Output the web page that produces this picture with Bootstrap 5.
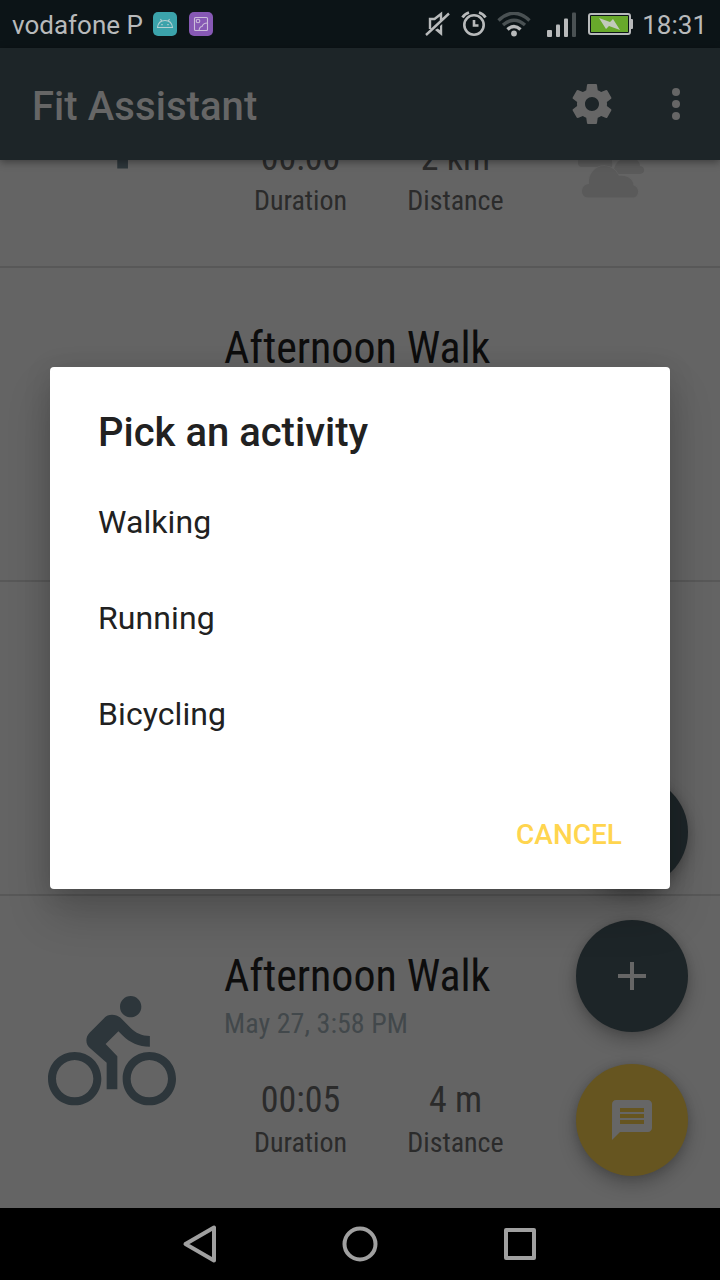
<!DOCTYPE html>
<html lang="en">
<head>
<meta charset="utf-8">
<meta name="viewport" content="width=device-width, initial-scale=1">
<title>Fit Assistant</title>
<link href="https://cdn.jsdelivr.net/npm/bootstrap@5.3.0/dist/css/bootstrap.min.css" rel="stylesheet">
<style>
  body { font-family: Roboto, "Liberation Sans", sans-serif; background: #646464; line-height: 1.172; }
  svg { display: block; flex: none; }
  .screen { width: 720px; height: 1280px; }
  .status-bar { height: 48px; background: #0c1417; color: #b8babb; font-size: 26px; padding: 0 13px 0 12px; }
  .operator, .clock { padding-top: 3px; }
  .status-bar .notice { margin-left: 10px; }
  .status-bar .notice + .notice { margin-left: 12px; }
  .mute { margin-right: 10px; }
  .wifi { margin: 2px 16px 0 10px; }
  .signal { margin-top: 1px; }
  .battery { margin: 0 9px 0 12px; }
  .app-bar { height: 112px; background: #1d2528; color: #666; padding: 0 32px; z-index: 2; box-shadow: 0 2px 8px rgba(0,0,0,.4); }
  .app-title { font-size: 40px; font-weight: 500; line-height: 48px; padding-top: 5px; letter-spacing: .07px; }
  .overflow-icon { margin: 0 -12px 0 36px; }
  .feed { height: 1048px; }
  .history { margin-top: -206px; }
  .activity { height: 314px; border-bottom: 2px solid #585858; padding: 54px 0 0 48px; font-family: "Roboto Condensed", Roboto, sans-serif; font-stretch: 75%; }
  .activity-icon { width: 128px; margin: 38px 48px 0 0; color: #2d363b; }
  .activity-title { font-size: 44px; line-height: 52px; color: #0d0d0d; letter-spacing: -.05px; }
  .activity-date { font-size: 28px; line-height: 33px; margin-top: 5px; color: #42484b; letter-spacing: .06px; }
  .stats { margin-top: 39px; color: #2b2b2b; gap: 3px; }
  .stats-first { margin-top: 129px; }
  .stat { width: 152px; text-align: center; padding-left: 1px; }
  .stat-value { font-size: 36px; line-height: 42px; }
  .stat-label { font-size: 28px; line-height: 33px; margin-top: 5px; letter-spacing: -.03px; }
  .weather { margin: 138px 0 0 44px; color: #5a5a5a; }
  .fabs { right: 32px; bottom: 32px; gap: 32px; }
  .fab { width: 112px; height: 112px; border: 0; background: #1d2528; color: #666; box-shadow: 0 8px 18px rgba(0,0,0,.25), 0 0 8px rgba(0,0,0,.12); }
  .fab-chat { background: #665520; }
  .picker { left: 50px; top: 367px; width: 620px; height: 522px; z-index: 5; border-radius: 4px; background: #fff; color: #212121; padding-top: 42px; box-shadow: 0 26px 44px rgba(0,0,0,.19), 0 4px 28px rgba(0,0,0,.12); }
  .picker-title { font-size: 40px; font-weight: 500; line-height: 47px; margin: 0 48px 18px; }
  .picker .list-group-item { height: 96px; font-size: 32px; padding: 2px 48px 0; color: #212121; background: none; letter-spacing: .08px; }
  .cancel { font-size: 28px; font-weight: 500; line-height: 33px; color: #ffd54f; padding: 0; margin: 56px 48px 0 0; border: 0; }
  .system-nav { height: 72px; background: #000; }
</style>
</head>
<body>
<div class="screen d-flex flex-column position-relative overflow-hidden">
  <header class="status-bar d-flex align-items-center">
    <span class="operator">vodafone P</span>
    <svg class="notice" width="24" height="24" viewBox="0 0 24 24"><rect width="24" height="24" rx="5" fill="#3ba3ab"/><path d="M4.500 15.500C5 11 8 8.500 12 8.500s7 2.500 7.500 7zM7.500 7l1.300 2.200M16.500 7l-1.300 2.200" fill="none" stroke="#b5d0d2" stroke-width="1.100"/><path d="M8.300 12h1.400v1.200H8.300zM14.300 12h1.400v1.200h-1.400z" fill="#b5d0d2"/></svg>
    <svg class="notice" width="24" height="24" viewBox="0 0 24 24"><rect width="24" height="24" rx="5" fill="#8759b5"/><g fill="none" stroke="#cbbdda" stroke-width="1.100"><rect x="5.500" y="5.500" width="13" height="13" rx="1"/><circle cx="9" cy="9" r="1.800"/><path d="M10 18.500c.5-3 1-4 3-4 1-3 3-3.500 5.500-3.500"/></g></svg>
    <svg class="mute ms-auto" width="26" height="26" viewBox="0 0 26 26" fill="none" stroke="#b8babb" stroke-width="2.400"><path d="M5 18V8h4.500L16 3v6M1 24L24 2.500"/><path d="M17.200 13v12L10 19l2.500-1.500 2.500 1.500v-4z" fill="#b8babb" stroke="none"/></svg>
    <svg width="26" height="26" viewBox="0 0 26 26" fill="none" stroke="#b8babb"><circle cx="13" cy="14" r="9.700" stroke-width="2.600"/><path d="M13 9v5.500h4.500" stroke-width="2.600"/><path d="M1.500 6.500Q3.500 3 8 1.500M24.500 6.500Q22.500 3 18 1.500" stroke-width="2.800"/></svg>
    <svg class="wifi" width="34" height="26" viewBox="0 0 34 26" fill="none" stroke-width="3.400"><path d="M1.500 8.500Q17-6 32.500 8.500M6 13Q17 3.500 28 13" stroke="#4a5153"/><path d="M10.500 17.500Q17 11.500 23.500 17.500" stroke="#b8babb"/><circle cx="17" cy="21.500" r="2.900" fill="#b8babb"/></svg>
    <svg class="signal" width="29" height="26" viewBox="0 0 29 26" fill="#b8babb"><rect y="18" width="5" height="7" rx="1"/><rect x="9" y="12.500" width="4" height="12.500" rx="1"/><rect x="17" y="6.500" width="4" height="18.500" rx="1"/><rect x="25" y="0.500" width="4" height="24.500" rx="1" fill="#4a5153"/></svg>
    <svg class="battery" width="45" height="24" viewBox="0 0 45 24"><rect x="1" y="2" width="41" height="20" rx="2" fill="none" stroke="#b8babb" stroke-width="2"/><rect x="3" y="4" width="37" height="16" fill="#68a92b"/><path d="M42 7h2q1 0 1 1v8q0 1-1 1h-2z" fill="#b8babb"/><path d="M11 6l11 4 3-3 7 11-11-4-3 3z" fill="#c2cabb"/></svg>
    <span class="clock">18:31</span>
  </header>

  <nav class="app-bar d-flex align-items-center position-relative">
    <span class="app-title me-auto">Fit Assistant</span>
    <svg width="48" height="48" viewBox="0 0 24 24" fill="currentColor"><path d="M19.430 12.980c.04-.32.070-.64.070-.98s-.03-.66-.07-.98l2.110-1.650c.19-.15.240-.42.120-.64l-2-3.460c-.12-.22-.39-.3-.61-.22l-2.490 1c-.52-.4-1.080-.73-1.690-.98l-.38-2.650C14.460 2.180 14.250 2 14 2h-4c-.25 0-.46.180-.49.420l-.38 2.650c-.61.250-1.170.590-1.690.980l-2.490-1c-.23-.09-.49 0-.61.220l-2 3.460c-.13.220-.07.490.120.640l2.110 1.650c-.04.320-.07.650-.07.980s.03.660.070.980l-2.110 1.650c-.19.150-.24.420-.12.640l2 3.460c.12.220.390.300.610.220l2.490-1c.52.400 1.080.730 1.690.980l.38 2.650c.03.240.240.420.490.420h4c.25 0 .46-.18.490-.42l.38-2.650c.61-.25 1.170-.59 1.690-.98l2.490 1c.23.090.490 0 .61-.22l2-3.460c.12-.22.070-.49-.12-.64l-2.110-1.650zM12 15.500c-1.930 0-3.500-1.570-3.500-3.500s1.570-3.500 3.500-3.500 3.500 1.570 3.500 3.500-1.570 3.500-3.500 3.500z"/></svg>
    <svg class="overflow-icon" width="48" height="48" viewBox="0 0 24 24" fill="currentColor"><circle cx="12" cy="6" r="2"/><circle cx="12" cy="12" r="2"/><circle cx="12" cy="18" r="2"/></svg>
  </nav>

  <main class="feed overflow-hidden position-relative">
    <div class="history">
      <article class="activity d-flex align-items-start">
        <svg class="activity-icon" height="128" viewBox="0 0 24 24" fill="currentColor"><path d="M13.490 5.480c1.100 0 2-.9 2-2s-.9-2-2-2-2 .9-2 2 .9 2 2 2zm-3.600 13.900l1-4.400 2.100 2v6h2v-7.500l-2.100-2 .6-3c1.300 1.500 3.300 2.500 5.500 2.500v-2c-1.900 0-3.500-1-4.300-2.400l-1-1.600c-.4-.6-1-1-1.700-1-.3 0-.5.1-.8.1l-5.200 2.200v4.700h2v-3.400l1.800-.7-1.600 8.100-4.900-1-.4 2 7 1.400z"/></svg>
        <div class="stats stats-first d-flex">
          <div class="stat"><div class="stat-value">00:00</div><div class="stat-label">Duration</div></div>
          <div class="stat"><div class="stat-value">2 km</div><div class="stat-label">Distance</div></div>
        </div>
        <svg class="weather" width="72" height="54" viewBox="0 0 72 54" fill="currentColor"><path d="M7 21Q3 21 3 17V8Q18-2 34 8q4 5 3 13zM43 28q-5 0-4-5 3-11 14-11 11-1 12 8c6 1 5 8 0 8z"/><path d="M13 51.500C5 51.500 5 38.500 14 38C13 28 20 20 29 20C36 20 41 24 44 30C52 29 58 33 58.500 39.500C65 41 64.500 51.500 58 51.500z" stroke="#646464" stroke-width="1.500" paint-order="stroke"/></svg>
      </article>
      <article class="activity d-flex align-items-start">
        <div class="activity-icon"></div>
        <div class="activity-title">Afternoon Walk</div>
      </article>
      <article class="activity"></article>
      <article class="activity d-flex align-items-start">
        <svg class="activity-icon" height="128" viewBox="0 0 24 24" fill="currentColor"><path d="M15.500 5.500c1.100 0 2-.9 2-2s-.9-2-2-2-2 .9-2 2 .9 2 2 2zM5 12c-2.800 0-5 2.200-5 5s2.200 5 5 5 5-2.200 5-5-2.200-5-5-5zm0 8.500c-1.900 0-3.500-1.600-3.500-3.500s1.600-3.500 3.500-3.500 3.500 1.600 3.500 3.500-1.600 3.500-3.500 3.500zm5.800-10l2.400-2.400.8.8c1.300 1.300 3 2.100 5.100 2.100V9c-1.500 0-2.700-.6-3.600-1.500l-1.900-1.900c-.5-.4-1-.6-1.600-.6s-1.100.2-1.400.6L7.800 8.400c-.4.4-.6.9-.6 1.400 0 .6.2 1.100.6 1.400L11 14v5h2v-6.200l-2.200-2.300zM19 12c-2.800 0-5 2.200-5 5s2.200 5 5 5 5-2.200 5-5-2.200-5-5-5zm0 8.500c-1.900 0-3.500-1.600-3.500-3.500s1.600-3.500 3.500-3.500 3.500 1.600 3.500 3.500-1.600 3.500-3.500 3.500z"/></svg>
        <div>
          <div class="activity-title">Afternoon Walk</div>
          <div class="activity-date">May 27, 3:58 PM</div>
          <div class="stats d-flex">
            <div class="stat"><div class="stat-value">00:05</div><div class="stat-label">Duration</div></div>
            <div class="stat"><div class="stat-value">4 m</div><div class="stat-label">Distance</div></div>
          </div>
        </div>
      </article>
    </div>
    <div class="fabs position-absolute d-flex flex-column">
      <button class="fab rounded-circle" aria-label="Start"></button>
      <button class="fab rounded-circle d-flex align-items-center justify-content-center" aria-label="Add"><svg width="48" height="48" viewBox="0 0 24 24" fill="currentColor"><path d="M19 13h-6v6h-2v-6H5v-2h6V5h2v6h6v2z"/></svg></button>
      <button class="fab fab-chat rounded-circle d-flex align-items-center justify-content-center" aria-label="Chat"><svg width="48" height="48" viewBox="0 0 24 24" fill="currentColor"><path d="M20 2H4c-1.100 0-1.990.9-1.990 2L2 22l4-4h14c1.100 0 2-.9 2-2V4c0-1.100-.9-2-2-2zM6 9h12v2H6V9zm12 5H6v-2h12v2zm0-6H6V6h12v2z"/></svg></button>
    </div>
  </main>

  <footer class="system-nav d-flex justify-content-center align-items-center position-relative">
    <svg width="160" height="40" viewBox="0 0 160 40" fill="none" stroke="#a0a0a0" stroke-width="4" stroke-linejoin="round"><path d="M94 3.500v33L65.500 20z"/></svg>
    <svg width="160" height="40" viewBox="0 0 160 40" fill="none" stroke="#a0a0a0" stroke-width="4"><circle cx="80" cy="20" r="15.500"/></svg>
    <svg width="160" height="40" viewBox="0 0 160 40" fill="none" stroke="#a0a0a0" stroke-width="4" stroke-linejoin="round"><rect x="66" y="6" width="28" height="28"/></svg>
  </footer>

  <section class="picker position-absolute d-flex flex-column" role="dialog" aria-label="Pick an activity">
    <h1 class="picker-title">Pick an activity</h1>
    <ul class="list-group list-group-flush">
      <li class="list-group-item border-0 d-flex align-items-center">Walking</li>
      <li class="list-group-item border-0 d-flex align-items-center">Running</li>
      <li class="list-group-item border-0 d-flex align-items-center">Bicycling</li>
    </ul>
    <button class="btn cancel align-self-end">CANCEL</button>
  </section>
</div>
<script src="https://cdn.jsdelivr.net/npm/bootstrap@5.3.0/dist/js/bootstrap.bundle.min.js"></script>
</body>
</html>
